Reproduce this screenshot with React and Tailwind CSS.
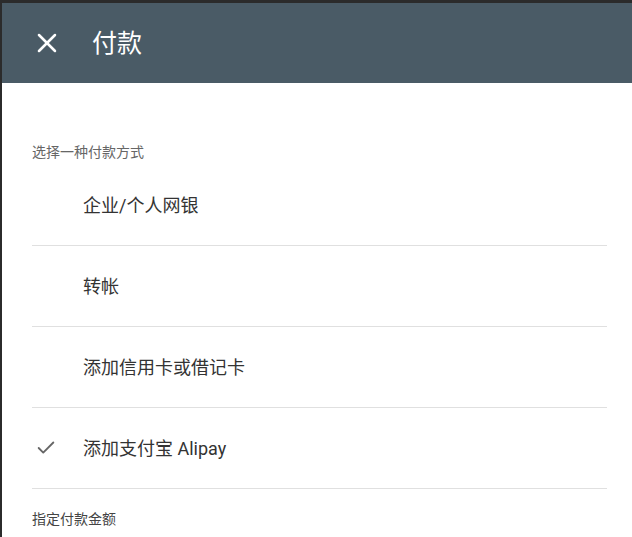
import { X, Check } from "lucide-react";

const methods = [
  { label: "企业/个人网银", checked: false },
  { label: "转帐", checked: false },
  { label: "添加信用卡或借记卡", checked: false },
  { label: "添加支付宝 Alipay", checked: true },
];

export default function App() {
  return (
    <div
      className="w-[632px] h-[537px] bg-[#2b2b2b] pt-[3px] pl-[2px] overflow-hidden"
      style={{ fontFamily: 'Roboto, "Noto Sans CJK SC", sans-serif' }}
    >
      <div className="h-full bg-white flex flex-col">
        <header className="h-[80px] bg-[#4a5b66] flex items-center px-[29px] shrink-0">
          <button className="text-white flex items-center">
            <X size={32} strokeWidth={1.9} />
          </button>
          <h1 className="ml-[29px] text-white text-[25px] leading-none">付款</h1>
        </header>

        <div className="pl-[30px] pr-[25px]">
          <div className="mt-[59px] h-[23px] text-[14px] leading-[20px] text-[#666]">选择一种付款方式</div>
          {methods.map((m) => (
            <div key={m.label} className="h-[81px] flex items-center border-b border-[#e0e0e0]">
              <div className="w-[51px] flex items-center pl-[3px] text-[#666]">
                {m.checked && <Check size={22} strokeWidth={2} />}
              </div>
              <span className="text-[18px] text-[#333]">{m.label}</span>
            </div>
          ))}
          <div className="mt-[20px] text-[14px] leading-[20px] text-[#444]">指定付款金额</div>
        </div>
      </div>
    </div>
  );
}
